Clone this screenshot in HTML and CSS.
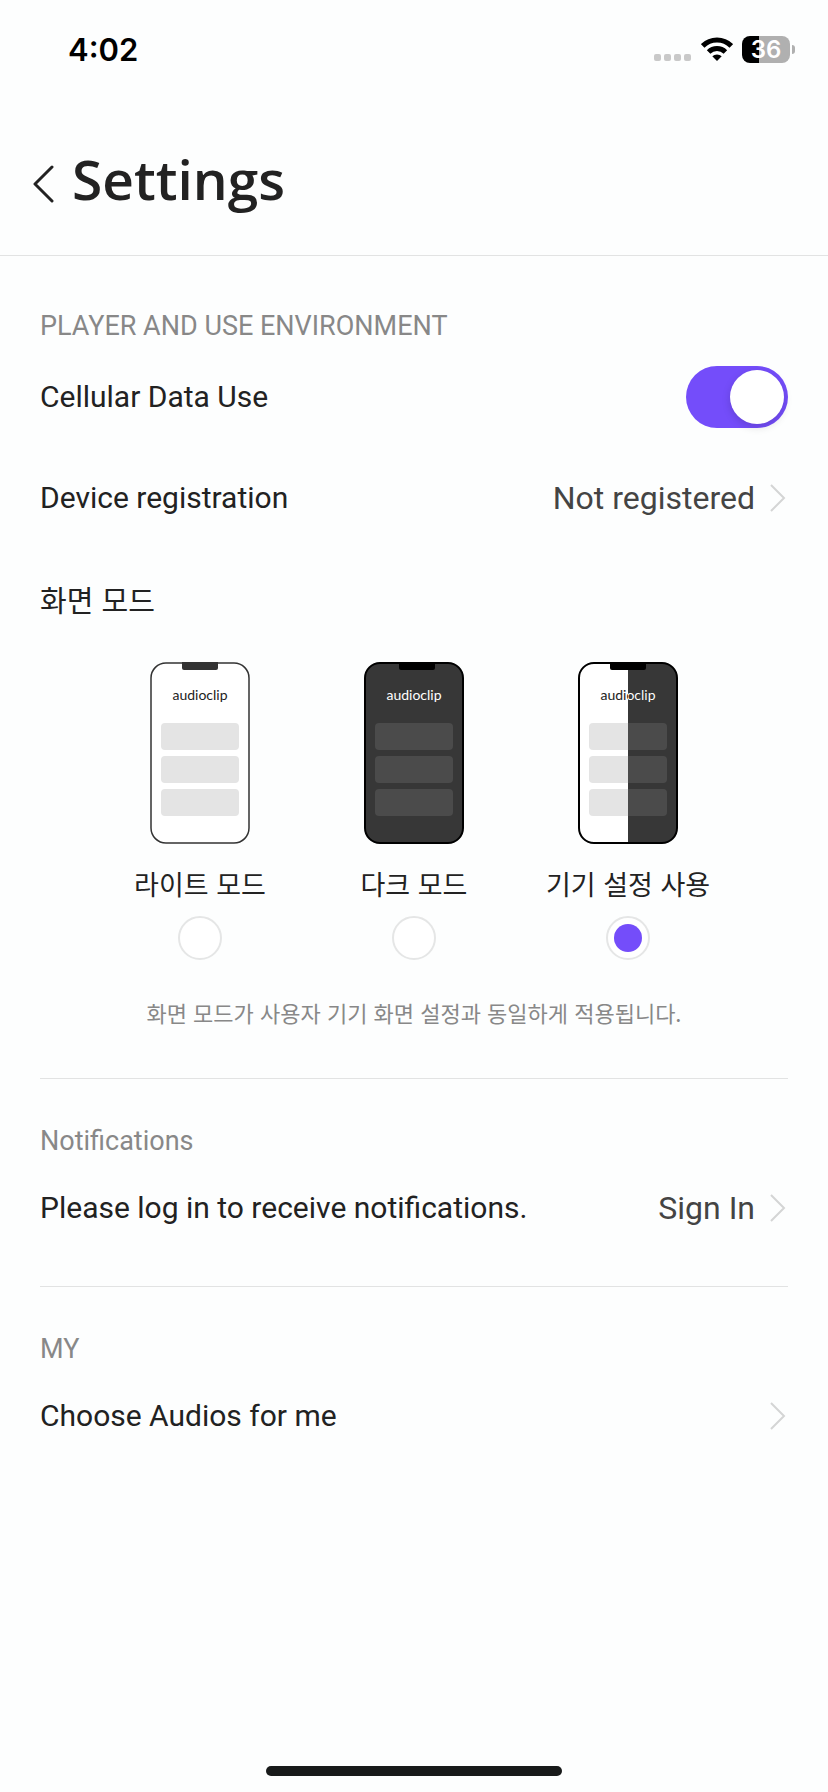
FILE: index.html
```html
<!DOCTYPE html>
<html lang="ko">
<head>
  <meta charset="UTF-8" />
  <meta name="viewport" content="width=device-width, initial-scale=1.0"/>
  <title>Settings</title>
  <link rel="stylesheet" href="styles.css">
</head>
<body>
  <div class="status-bar">
    <span class="time">4:02</span>
    <div class="status-icons">
      <svg width="38" height="24" viewBox="0 0 38 24" fill="#c9c9c9">
        <rect x="0" y="17" width="7" height="7" rx="2"/>
        <rect x="10" y="17" width="7" height="7" rx="2"/>
        <rect x="20" y="17" width="7" height="7" rx="2"/>
        <rect x="30" y="17" width="7" height="7" rx="2"/>
      </svg>
      <svg width="32" height="24" viewBox="0 0 32 24" fill="none" stroke="#000" stroke-width="5">
        <path d="M1.700 8.900a20.300 20.300 0 0 1 28.600 0"/>
        <path d="M7.600 15a12 12 0 0 1 16.800 0"/>
        <path d="M16 24l-4.700-4.700a6.800 6.800 0 0 1 9.400 0z" fill="#000" stroke="none"/>
      </svg>
      <div class="battery"><span class="battery-level">36</span></div>
    </div>
  </div>

  <header class="header">
    <button class="back" aria-label="Back">
      <svg width="22" height="38" viewBox="0 0 22 38" fill="none" stroke="#222" stroke-width="3" stroke-linecap="round" stroke-linejoin="round">
        <path d="M20 2L3 19l17 17"/>
      </svg>
    </button>
    <h1>Settings</h1>
  </header>

  <main>
    <section class="section">
      <h2>PLAYER AND USE ENVIRONMENT</h2>
      <label class="row">
        <span class="row-title">Cellular Data Use</span>
        <input type="checkbox" class="switch" checked>
      </label>
      <a class="row" href="#">
        <span class="row-title">Device registration</span>
        <span class="row-value">Not registered</span>
        <svg class="arrow" viewBox="0 0 16 28"><path d="M1 1l13 13L1 27"/></svg>
      </a>
      <div class="row">
        <h3 id="modeTitle">화면 모드</h3>
      </div>
      <div class="modes" role="radiogroup" aria-labelledby="modeTitle">
        <label class="mode">
          <svg class="phone" viewBox="0 0 100 182">
            <rect x="1" y="1" width="98" height="180" rx="15" fill="#fff" stroke="#333" stroke-width="1.500"/>
            <path d="M32 0h36v6a2 2 0 0 1-2 2H34a2 2 0 0 1-2-2z" fill="#333"/>
            <text class="brand" x="50" y="38" fill="#222">audioclip</text>
            <g fill="#e4e4e4">
              <rect x="11" y="61" width="78" height="27" rx="4"/>
              <rect x="11" y="94" width="78" height="27" rx="4"/>
              <rect x="11" y="127" width="78" height="27" rx="4"/>
            </g>
          </svg>
          <span class="mode-name">라이트 모드</span>
          <input type="radio" name="mode">
        </label>
        <label class="mode">
          <svg class="phone" viewBox="0 0 100 182">
            <rect x="1" y="1" width="98" height="180" rx="15" fill="#373737" stroke="#000" stroke-width="2"/>
            <path d="M35 0h36v6a2 2 0 0 1-2 2H37a2 2 0 0 1-2-2z" fill="#000"/>
            <text class="brand" x="50" y="38" fill="#fff">audioclip</text>
            <g fill="#4b4b4b">
              <rect x="11" y="61" width="78" height="27" rx="4"/>
              <rect x="11" y="94" width="78" height="27" rx="4"/>
              <rect x="11" y="127" width="78" height="27" rx="4"/>
            </g>
          </svg>
          <span class="mode-name">다크 모드</span>
          <input type="radio" name="mode">
        </label>
        <label class="mode">
          <svg class="phone" viewBox="0 0 100 182">
            <!-- hard stops at the middle: light half, dark half -->
            <defs>
              <linearGradient id="screen" gradientUnits="userSpaceOnUse" x1="0" y1="0" x2="100" y2="0">
                <stop offset=".5" stop-color="#fff"/><stop offset=".5" stop-color="#373737"/>
              </linearGradient>
              <linearGradient id="brand" gradientUnits="userSpaceOnUse" x1="0" y1="0" x2="100" y2="0">
                <stop offset=".5" stop-color="#222"/><stop offset=".5" stop-color="#fff"/>
              </linearGradient>
              <linearGradient id="card" gradientUnits="userSpaceOnUse" x1="0" y1="0" x2="100" y2="0">
                <stop offset=".5" stop-color="#e4e4e4"/><stop offset=".5" stop-color="#4b4b4b"/>
              </linearGradient>
            </defs>
            <rect x="1" y="1" width="98" height="180" rx="15" fill="url(#screen)" stroke="#000" stroke-width="2"/>
            <path d="M32 0h36v6a2 2 0 0 1-2 2H34a2 2 0 0 1-2-2z" fill="#000"/>
            <text class="brand" x="50" y="38" fill="url(#brand)">audioclip</text>
            <g fill="url(#card)">
              <rect x="11" y="61" width="78" height="27" rx="4"/>
              <rect x="11" y="94" width="78" height="27" rx="4"/>
              <rect x="11" y="127" width="78" height="27" rx="4"/>
            </g>
          </svg>
          <span class="mode-name">기기 설정 사용</span>
          <input type="radio" name="mode" checked>
        </label>
      </div>
      <p class="hint">화면 모드가 사용자 기기 화면 설정과 동일하게 적용됩니다.</p>
    </section>

    <section class="section">
      <h2>Notifications</h2>
      <a class="row" href="#">
        <span class="row-title">Please log in to receive notifications.</span>
        <span class="row-value">Sign In</span>
        <svg class="arrow" viewBox="0 0 16 28"><path d="M1 1l13 13L1 27"/></svg>
      </a>
    </section>

    <section class="section">
      <h2>MY</h2>
      <a class="row" href="#">
        <span class="row-title">Choose Audios for me</span>
        <svg class="arrow" viewBox="0 0 16 28"><path d="M1 1l13 13L1 27"/></svg>
      </a>
    </section>
  </main>

  <div class="home-indicator"></div>
</body>
</html>
```
FILE: styles.css
```css
* {
  box-sizing: border-box;
}
body {
  font-family: Roboto, 'Noto Sans CJK KR', sans-serif;
  display: flex;
  flex-direction: column;
  min-height: 100vh;
  background-color: #fdfefe;
  color: #222;
  margin: 0;
}
h1, h2, h3, p {
  margin: 0;
}

/* status bar */
.status-bar {
  display: flex;
  justify-content: space-between;
  align-items: center;
  height: 98px;
  padding: 0 33px 0 68px;
}
.time {
  font-family: Inter, sans-serif;
  font-size: 31px;
  font-weight: 600;
  color: #000;
}
.status-icons {
  display: flex;
  align-items: center;
  gap: 9px;
}
.battery {
  display: flex;
  align-items: center;
  gap: 2px;
}
.battery-level {
  width: 48px;
  height: 27px;
  border-radius: 8px;
  background: linear-gradient(to right, #000 35%, #b0b0b0 35%);
  color: #fff;
  font-family: Inter, sans-serif;
  font-size: 24px;
  font-weight: 600;
  line-height: 27px;
  text-align: center;
}
.battery::after {
  content: "";
  width: 3px;
  height: 9px;
  border-radius: 0 4px 4px 0;
  background-color: #b0b0b0;
}

/* header */
.header {
  display: flex;
  align-items: center;
  gap: 18px;
  padding: 40px 32px 35px;
  border-bottom: 1px solid #e2e3e3;
}
.back {
  display: flex;
  padding: 10px 0 0;
  border: none;
  background: none;
  cursor: pointer;
}
h1 {
  font-family: 'Open Sans', sans-serif;
  font-size: 55px;
  font-weight: 600;
  line-height: 82px;
}

/* sections */
main {
  flex: 1;
}
.section {
  margin: 0 40px;
  padding: 46px 0 28px;
}
.section:first-child {
  padding: 54px 0 50px;
}
.section:first-child h2 {
  margin-bottom: 4px;
}
.section + .section {
  border-top: 1px solid #e2e3e3;
}
h2 {
  color: #888;
  font-size: 27px;
  font-weight: 400;
  line-height: 32px;
}
.row {
  display: flex;
  align-items: center;
  height: 101px;
  color: #222;
  text-decoration: none;
}
.row-title {
  flex: 1;
  font-size: 30px;
}
.row-value {
  color: #444;
  font-size: 32px;
}
.arrow {
  width: 16px;
  height: 28px;
  margin: 0 2px 0 15px;
  fill: none;
  stroke: #d4d5d5;
  stroke-width: 2;
}
h3 {
  font-family: 'Noto Sans CJK KR', sans-serif;
  font-size: 29px;
  font-weight: 400;
  line-height: 40px;
}
.switch {
  appearance: none;
  width: 102px;
  height: 62px;
  margin: 0;
  padding: 4px;
  border-radius: 31px;
  background-color: #ccc;
  cursor: pointer;
}
.switch::before {
  content: "";
  display: block;
  width: 54px;
  height: 54px;
  border-radius: 50%;
  background-color: #fff;
  box-shadow: 0 3px 8px rgba(0, 0, 0, 0.15);
}
.switch:checked {
  background-color: #744dfa;
}
.switch:checked::before {
  margin-left: auto;
}

/* screen mode */
.modes {
  display: grid;
  grid-template-columns: repeat(3, 1fr);
  max-width: 642px;
  margin: 0 auto;
  padding-top: 13px;
}
.mode {
  display: flex;
  flex-direction: column;
  align-items: center;
  cursor: pointer;
}
.phone {
  width: 100px;
  height: 182px;
  margin-bottom: 20px;
}
.brand {
  font-family: Lato, sans-serif;
  font-size: 14px;
  text-anchor: middle;
}
.mode-name {
  font-family: 'Noto Sans CJK KR', sans-serif;
  font-size: 27px;
  line-height: 40px;
}
.mode input {
  appearance: none;
  width: 44px;
  height: 44px;
  margin: 12px 0 0;
  padding: 6px;
  border: 2px solid #e5e6e6;
  border-radius: 50%;
  background-color: #fff;
}
.mode input:checked::before {
  content: "";
  display: block;
  width: 28px;
  height: 28px;
  border-radius: 50%;
  background-color: #744dfa;
}
.hint {
  margin-top: 36px;
  color: #888;
  font-family: 'Noto Sans CJK KR', sans-serif;
  font-size: 22px;
  line-height: 32px;
  text-align: center;
}

.home-indicator {
  width: 296px;
  height: 10px;
  margin: 0 auto 16px;
  border-radius: 5px;
  background-color: #181a1a;
}
```
